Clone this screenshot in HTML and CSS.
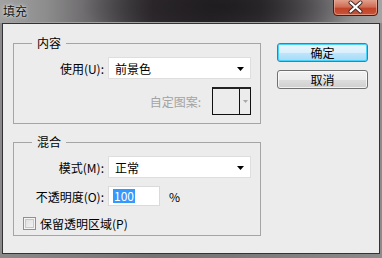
FILE: index.html
```html
<!DOCTYPE html>
<html lang="zh-CN">
<head>
<meta charset="utf-8">
<title>填充</title>
<link rel="stylesheet" href="styles.css">
</head>
<body>
<div class="window">
  <div class="titlebar">
    <span class="title">填充</span>
    <div class="close">
      <svg width="45" height="16" viewBox="0 0 45 16">
        <defs>
          <linearGradient id="cg" x1="0" y1="0" x2="0" y2="1">
            <stop offset="0" stop-color="#e2a08c"/>
            <stop offset="0.45" stop-color="#cf6c52"/>
            <stop offset="0.55" stop-color="#c0432a"/>
            <stop offset="1" stop-color="#c9563a"/>
          </linearGradient>
        </defs>
        <path d="M0.5 0 V12 Q0.5 15.5 4 15.5 H41 Q44.5 15.5 44.5 12 V0" fill="url(#cg)" stroke="#4a1a14"/>
        <path d="M1.5 0 V11.5 Q1.5 14.5 4.5 14.5 H40.5 Q43.5 14.5 43.5 11.5 V0" fill="none" stroke="#eeb6a6" stroke-opacity="0.6"/>
        <path d="M17.5 2.5 L27.5 11.5 M27.5 2.5 L17.5 11.5" stroke="#3a2a28" stroke-width="4" stroke-linecap="round"/>
        <path d="M17.5 2.5 L27.5 11.5 M27.5 2.5 L17.5 11.5" stroke="#ffffff" stroke-width="2.2" stroke-linecap="round"/>
      </svg>
    </div>
  </div>
  <div class="client">
    <div class="main">
      <fieldset class="group g1">
        <legend>内容</legend>
        <div class="row r-use">
          <span class="lbl">使用(U):</span>
          <div class="select"><span>前景色</span><svg class="arrow" width="7" height="4" viewBox="0 0 7 4"><path d="M0 0H7L3.5 4Z" fill="#000"/></svg></div>
        </div>
        <div class="row r-pattern">
          <span class="disabled">自定图案:</span>
          <div class="pattern">
            <div class="swatch"></div>
            <div class="pat-btn"><svg width="5" height="3" viewBox="0 0 5 3"><path d="M0 0H5L2.5 3Z" fill="#a8a8a8"/></svg></div>
          </div>
        </div>
      </fieldset>
      <fieldset class="group g2">
        <legend>混合</legend>
        <div class="row r-mode">
          <span class="lbl">模式(M):</span>
          <div class="select"><span>正常</span><svg class="arrow" width="7" height="4" viewBox="0 0 7 4"><path d="M0 0H7L3.5 4Z" fill="#000"/></svg></div>
        </div>
        <div class="row r-opacity">
          <span class="lbl">不透明度(O):</span>
          <div class="input"><span class="sel">100</span></div>
          <span class="pct">%</span>
        </div>
        <div class="row r-check">
          <span class="checkbox"></span>
          <span>保留透明区域(P)</span>
        </div>
      </fieldset>
    </div>
    <div class="buttons">
      <button class="btn default">确定</button>
      <button class="btn">取消</button>
    </div>
  </div>
</div>
</body>
</html>
```
FILE: styles.css
```css
html, body {
  margin: 0;
  padding: 0;
}
body {
  width: 382px;
  height: 258px;
  overflow: hidden;
  font-family: "Noto Sans CJK SC", "Noto Sans", sans-serif;
  font-size: 12px;
  color: #000;
}
.window {
  width: 382px;
  height: 258px;
  display: flex;
  flex-direction: column;
  background: linear-gradient(to right, #8a8a8a 0%, #767576 40%, #7a797a 60%, #8c8c8c 100%);
}
.titlebar {
  height: 22px;
  border-bottom: 1px solid #a2a2a2;
  display: flex;
  justify-content: space-between;
  align-items: flex-start;
  background:
    radial-gradient(ellipse 140px 40px at 58% 30%, rgba(30,27,30,0.9), rgba(30,27,30,0) 100%),
    linear-gradient(to right, #a2a2a2 0%, #8e8d8e 12%, #5c5a5c 28%, #332f33 40%, #2c282c 55%, #3a373a 68%, #6f6d6f 82%, #8e8d8e 90%, #a4a4a4 100%);
}
.title {
  margin: 3px 0 0 3px;
  line-height: 16px;
  color: #141414;
  text-shadow: 0 0 4px rgba(255,255,255,0.8), 0 0 2px rgba(255,255,255,0.6);
}
.close {
  margin-right: 4px;
  height: 16px;
  display: flex;
}
.client {
  flex: 1;
  margin: 0 2px 4px 2px;
  border: 1px solid #353235;
  background: #ececec;
  display: flex;
  padding: 11px 11px 0 10px;
}
.main {
  display: flex;
  flex-direction: column;
  width: 248px;
}
.group {
  box-sizing: border-box;
  width: 248px;
  margin: 0;
  padding: 0 9px 0 0;
  border: 1px solid #a5a5a5;
  min-inline-size: 0;
}
.group legend {
  margin-left: 18px;
  padding: 0 5px;
  line-height: 16px;
  height: 16px;
}
.g1 { padding-bottom: 8px; }
.g2 { margin-top: 10px; padding-bottom: 4px; }
.row {
  display: flex;
  align-items: center;
}
.lbl {
  width: 90px;
  text-align: right;
  margin-right: 4px;
  flex: none;
  white-space: nowrap;
}
.r-use { margin-top: 6px; }
.r-mode { margin-top: 6px; }
.select {
  flex: 1;
  height: 22px;
  box-sizing: border-box;
  background: #fff;
  border: 1px solid #dedede;
  display: flex;
  align-items: center;
  justify-content: space-between;
  padding: 0 6px 0 6px;
}
.select .arrow { margin-top: 1px; }
.r-pattern {
  margin-top: 8px;
  justify-content: flex-end;
}
.disabled {
  color: #a3a3a3;
  margin-right: 11px;
}
.pattern {
  width: 39px;
  height: 28px;
  box-sizing: border-box;
  border: 1px solid #111;
  border-top: 2px solid #222;
  display: flex;
  background: #ececec;
}
.swatch {
  width: 26px;
  border-right: 1px solid #111;
}
.pat-btn {
  flex: 1;
  display: flex;
  align-items: center;
  justify-content: center;
}
.r-opacity { margin-top: 8px; }
.input {
  width: 52px;
  height: 20px;
  box-sizing: border-box;
  background: #fff;
  border: 1px solid #dadada;
  display: flex;
  align-items: center;
  padding-left: 4px;
}
.sel {
  background: #3399ff;
  color: #fff;
  line-height: 14px;
  padding: 0 1px;
}
.pct { margin-left: 9px; }
.r-check {
  margin-top: 9px;
  height: 16px;
}
.checkbox {
  width: 13px;
  height: 13px;
  box-sizing: border-box;
  margin-left: 9px;
  margin-right: 4px;
  border: 1px solid #8e8f8f;
  background: linear-gradient(135deg, #dcdcdc 0%, #f6f6f6 100%);
  box-shadow: inset 0 0 0 1px #f4f4f4, inset 0 0 0 2px #c8c8c8;
}
.buttons {
  margin-left: 16px;
  margin-top: 8px;
  display: flex;
  flex-direction: column;
  gap: 8px;
}
.btn {
  width: 91px;
  height: 19px;
  box-sizing: border-box;
  margin: 0;
  padding: 0;
  font: inherit;
  line-height: 15px;
  color: #000;
  border: 1px solid #707070;
  border-radius: 3px;
  background: linear-gradient(to bottom, #f2f2f2 0%, #ebebeb 50%, #dddddd 51%, #cfcfcf 100%);
  box-shadow: inset 0 0 0 1px rgba(255,255,255,0.7);
}
.btn.default {
  border-color: #3c7fb1;
  background: linear-gradient(to bottom, #eaf6fd 0%, #d9f0fc 50%, #bee6fd 51%, #a7d9f5 100%);
  box-shadow: inset 0 0 0 1px #48d4fa;
}
```
